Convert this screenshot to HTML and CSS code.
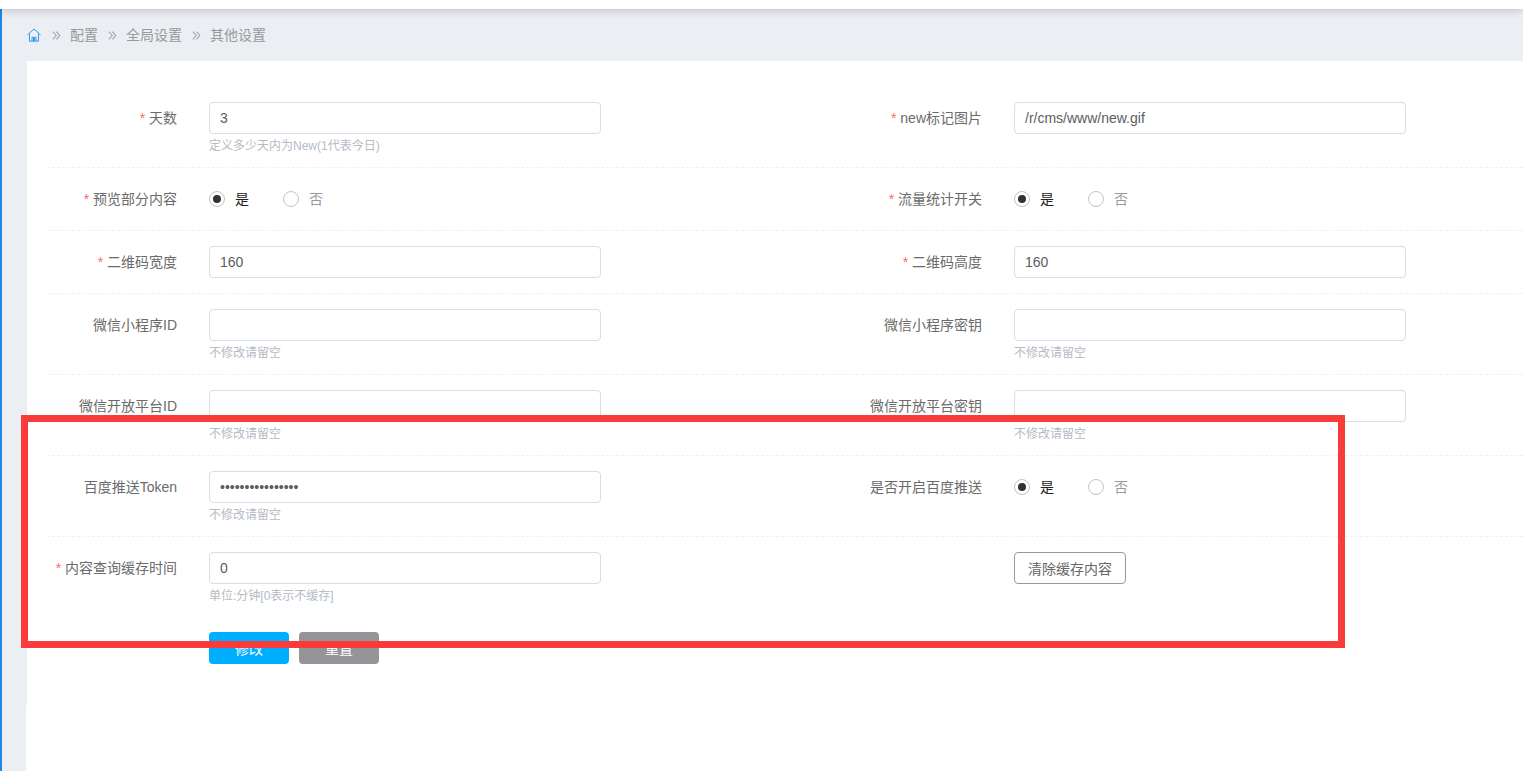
FILE: index.html
```html
<!DOCTYPE html>
<html lang="zh-CN">
<head>
<meta charset="utf-8">
<title>其他设置</title>
<link rel="stylesheet" href="styles.css">
</head>
<body>
<div class="topbar"></div>
<div class="main">
  <nav class="crumbs">
    <svg class="home" viewBox="0 0 14 14" width="14" height="14" fill="none" stroke="#2d9cf0" stroke-width="1"><path d="M0.5 6.8 7 1l6.5 5.8"/><path d="M2.5 5.6V13.2h9V5.6"/><path d="M5 13V9.2h1.5V13M7.5 13V9.2H9V13"/></svg>
    <svg class="sep" viewBox="0 0 9 9" width="9" height="9" fill="none" stroke="#a3a3a3" stroke-width="1.1"><path d="M.8.6 4.2 4.5.8 8.4M4.4.6 7.8 4.5 4.4 8.4"/></svg>
    <span>配置</span>
    <svg class="sep" viewBox="0 0 9 9" width="9" height="9" fill="none" stroke="#a3a3a3" stroke-width="1.1"><path d="M.8.6 4.2 4.5.8 8.4M4.4.6 7.8 4.5 4.4 8.4"/></svg>
    <span>全局设置</span>
    <svg class="sep" viewBox="0 0 9 9" width="9" height="9" fill="none" stroke="#a3a3a3" stroke-width="1.1"><path d="M.8.6 4.2 4.5.8 8.4M4.4.6 7.8 4.5 4.4 8.4"/></svg>
    <span>其他设置</span>
  </nav>
  <div class="card">
    <form class="form">
      <div class="row">
        <div class="field">
          <label class="label"><i>*</i> 天数</label>
          <div class="control"><input class="input" type="text" value="3"><p class="hint">定义多少天内为New(1代表今日)</p></div>
        </div>
        <div class="field">
          <label class="label"><i>*</i> new标记图片</label>
          <div class="control"><input class="input" type="text" value="/r/cms/www/new.gif"></div>
        </div>
      </div>
      <div class="row">
        <div class="field">
          <label class="label"><i>*</i> 预览部分内容</label>
          <div class="control radios"><span class="radio on"></span><span class="yes">是</span><span class="radio"></span><span class="no">否</span></div>
        </div>
        <div class="field">
          <label class="label"><i>*</i> 流量统计开关</label>
          <div class="control radios"><span class="radio on"></span><span class="yes">是</span><span class="radio"></span><span class="no">否</span></div>
        </div>
      </div>
      <div class="row">
        <div class="field">
          <label class="label"><i>*</i> 二维码宽度</label>
          <div class="control"><input class="input" type="text" value="160"></div>
        </div>
        <div class="field">
          <label class="label"><i>*</i> 二维码高度</label>
          <div class="control"><input class="input" type="text" value="160"></div>
        </div>
      </div>
      <div class="row">
        <div class="field">
          <label class="label">微信小程序ID</label>
          <div class="control"><input class="input" type="text"><p class="hint">不修改请留空</p></div>
        </div>
        <div class="field">
          <label class="label">微信小程序密钥</label>
          <div class="control"><input class="input" type="text"><p class="hint">不修改请留空</p></div>
        </div>
      </div>
      <div class="row">
        <div class="field">
          <label class="label">微信开放平台ID</label>
          <div class="control"><input class="input" type="text"><p class="hint">不修改请留空</p></div>
        </div>
        <div class="field">
          <label class="label">微信开放平台密钥</label>
          <div class="control"><input class="input" type="text"><p class="hint">不修改请留空</p></div>
        </div>
      </div>
      <div class="row">
        <div class="field">
          <label class="label">百度推送Token</label>
          <div class="control"><input class="input" type="password" value="1234567890123456"><p class="hint">不修改请留空</p></div>
        </div>
        <div class="field">
          <label class="label">是否开启百度推送</label>
          <div class="control radios"><span class="radio on"></span><span class="yes">是</span><span class="radio"></span><span class="no">否</span></div>
        </div>
      </div>
      <div class="row last">
        <div class="field">
          <label class="label"><i>*</i> 内容查询缓存时间</label>
          <div class="control"><input class="input" type="text" value="0"><p class="hint">单位:分钟[0表示不缓存]</p></div>
        </div>
        <div class="field">
          <span class="label"></span>
          <div class="control"><button class="btn-outline" type="button">清除缓存内容</button></div>
        </div>
      </div>
      <div class="actions">
        <button class="btn primary" type="button">修改</button>
        <button class="btn gray" type="button">重置</button>
      </div>
    </form>
  </div>
  <div class="tail"></div>
</div>
<div class="highlight"></div>
</body>
</html>
```
FILE: styles.css
```css
* { box-sizing: border-box; }
html, body { margin: 0; height: 100%; }
body {
  height: 771px;
  overflow: hidden;
  display: flex;
  flex-direction: column;
  background: #fff;
  font-family: "Liberation Sans", "Noto Sans CJK SC", sans-serif;
  font-size: 14px;
  color: #666;
}
.topbar {
  height: 9px;
  flex: none;
  background: #fff;
  box-shadow: 0 2px 8px rgba(0, 0, 0, .18);
  position: relative;
  z-index: 1;
}
.main {
  flex: 1;
  display: flex;
  flex-direction: column;
  background: #ebeef3;
  border-left: 2px solid #1e88e5;
}
.crumbs {
  height: 52px;
  flex: none;
  display: flex;
  align-items: center;
  padding-left: 25px;
  color: #999;
  line-height: 20px;
}
.home { margin-right: 11px; }
.sep { margin-right: 9px; }
.crumbs span { margin-right: 10px; }
.card {
  margin-left: 25px;
  height: 644px;
  flex: none;
  background: #fff;
  padding: 26px 0 0 20px;
}
.tail {
  flex: 1;
  margin-left: 24px;
  background: #fff;
}
.row {
  display: grid;
  grid-template-columns: 805px 1fr;
  padding: 15px 0;
  border-bottom: 1px dashed #eef0f3;
}
.row.last { border-bottom: 0; }
.field { display: flex; align-items: flex-start; }
.label {
  width: 130px;
  flex: none;
  text-align: right;
  line-height: 32px;
  color: #6b6b6b;
}
.label i {
  font-style: normal;
  color: #f56c6c;
}
.control { margin-left: 32px; width: 392px; }
.input {
  display: block;
  width: 392px;
  height: 32px;
  padding: 0 10px;
  border: 1px solid #d9dde5;
  border-radius: 4px;
  background: #fff;
  font: inherit;
  color: #5c5c5c;
  outline: 0;
}
.hint {
  margin: 0;
  height: 18px;
  font-size: 12px;
  line-height: 24px;
  color: #b4bbc5;
}
.radios {
  display: flex;
  align-items: center;
  height: 32px;
}
.radio {
  width: 16px;
  height: 16px;
  flex: none;
  border: 1px solid #c4c4c4;
  border-radius: 50%;
  display: flex;
  align-items: center;
  justify-content: center;
}
.radio.on::after {
  content: "";
  width: 8px;
  height: 8px;
  border-radius: 50%;
  background: #333;
}
.yes { margin-left: 10px; margin-right: 34px; color: #222; line-height: 30px; }
.no { margin-left: 10px; color: #999; line-height: 30px; }
.btn-outline {
  display: block;
  width: 112px;
  height: 32px;
  padding: 0;
  border: 1px solid #999;
  border-radius: 4px;
  background: #fff;
  font: inherit;
  color: #666;
}
.actions {
  display: flex;
  gap: 10px;
  padding: 15px 0 0 162px;
}
.btn {
  width: 80px;
  height: 32px;
  padding: 0;
  border: 0;
  border-radius: 4px;
  font: inherit;
  color: #fff;
}
.primary { background: #00aeff; }
.gray { background: #939599; }
.highlight {
  position: absolute;
  left: 21px;
  top: 415px;
  width: 1324px;
  height: 233px;
  border: 7px solid #fb3a3a;
  pointer-events: none;
}
```
